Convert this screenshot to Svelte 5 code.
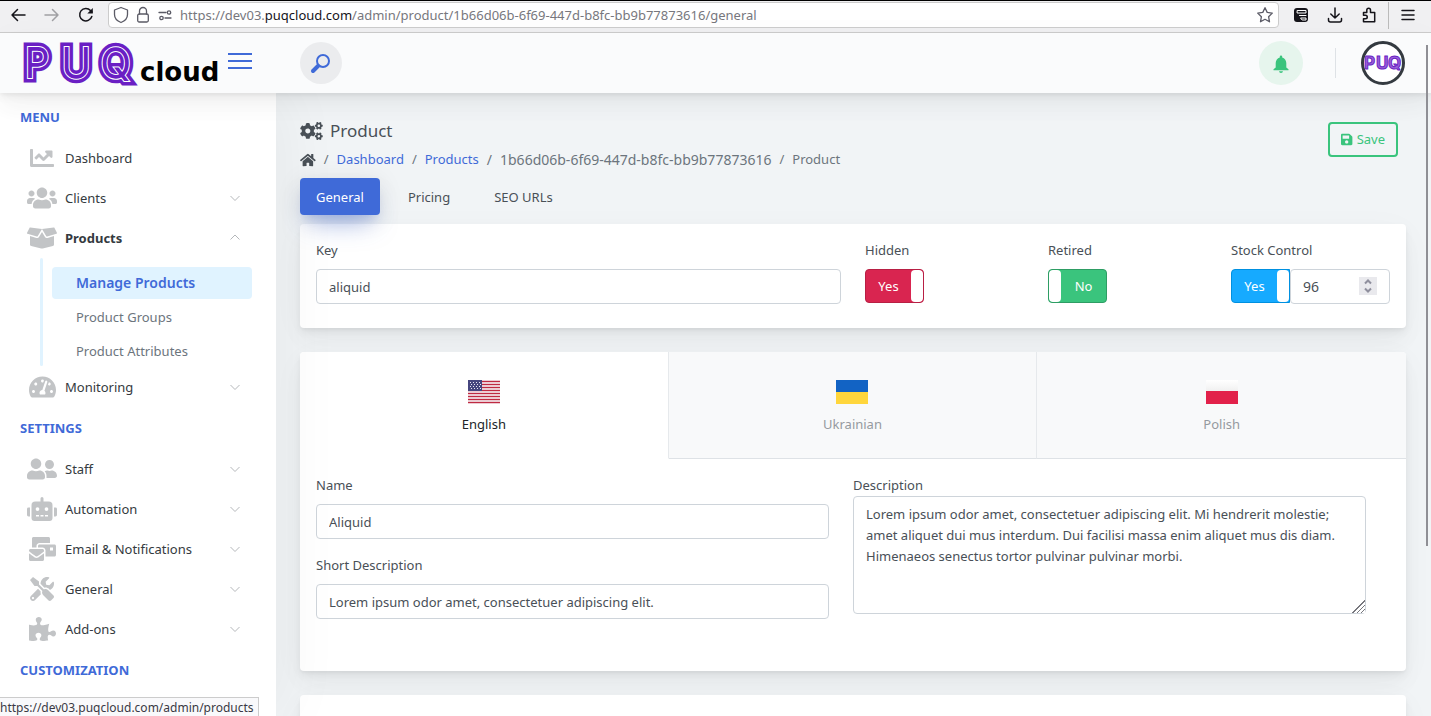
<script>
  const icons = {
    chart: { w: 512, d: 'M496 384H64V80c0-8.84-7.16-16-16-16H16C7.16 64 0 71.16 0 80v336c0 17.67 14.33 32 32 32h464c8.84 0 16-7.16 16-16v-32c0-8.84-7.16-16-16-16zM464 96H345.94c-21.38 0-32.09 25.85-16.97 40.97l32.4 32.4L288 242.75l-73.37-73.37c-12.5-12.5-32.76-12.5-45.25 0l-68.69 68.69c-6.25 6.25-6.25 16.38 0 22.63l22.62 22.62c6.25 6.25 16.38 6.25 22.63 0L192 237.25l73.37 73.37c12.5 12.5 32.76 12.5 45.25 0l96-96 32.4 32.4c15.12 15.12 40.97 4.41 40.97-16.97V112c.01-8.84-7.15-16-15.99-16z' },
    users: { w: 640, d: 'M96 224c35.3 0 64-28.7 64-64s-28.7-64-64-64-64 28.7-64 64 28.7 64 64 64zm448 0c35.3 0 64-28.7 64-64s-28.7-64-64-64-64 28.7-64 64 28.7 64 64 64zm32 32h-64c-17.6 0-33.5 7.1-45.1 18.6 40.3 22.1 68.9 62 75.1 109.4h66c17.7 0 32-14.3 32-32v-32c0-35.3-28.7-64-64-64zm-256 0c61.9 0 112-50.1 112-112S381.9 32 320 32 208 82.1 208 144s50.1 112 112 112zm76.8 32h-8.3c-20.8 10-43.9 16-68.5 16s-47.6-6-68.5-16h-8.3C179.6 288 128 339.6 128 403.2V432c0 26.5 21.5 48 48 48h288c26.5 0 48-21.5 48-48v-28.8c0-63.6-51.6-115.2-115.2-115.2zm-223.7-13.4C161.5 263.1 145.6 256 128 256H64c-35.3 0-64 28.7-64 64v32c0 17.7 14.3 32 32 32h65.9c6.3-47.4 34.9-87.3 75.2-109.4z' },
    box: { w: 640, d: 'M425.7 256c-16.9 0-32.8-9-41.4-23.4L320 126l-64.2 106.6c-8.7 14.5-24.6 23.5-41.5 23.5-4.5 0-9-.6-13.3-1.9L64 215v178c0 14.7 10 27.5 24.2 31l216.2 54.1c10.2 2.5 20.9 2.5 31 0L551.8 424c14.2-3.6 24.2-16.4 24.2-31V215l-137 39.1c-4.3 1.3-8.8 1.9-13.3 1.9zm212.6-112.2L586.8 41c-3.1-6.2-9.8-9.8-16.7-8.9L320 64l91.7 152.1c3.8 6.3 11.4 9.3 18.5 7.3l197.9-56.5c9.9-2.9 14.7-13.9 10.2-23.1zM53.2 41L1.7 143.8c-4.6 9.2.3 20.2 10.1 23l197.9 56.5c7.1 2 14.7-1 18.5-7.3L320 64 69.8 32.1c-6.9-.8-13.5 2.7-16.6 8.9z' },
    gauge: { w: 576, d: 'M288 32C128.94 32 0 160.94 0 320c0 52.8 14.25 102.26 39.06 144.8 5.61 9.62 16.3 15.2 27.44 15.2h443c11.14 0 21.83-5.58 27.44-15.2C561.75 422.26 576 372.8 576 320c0-159.06-128.94-288-288-288zm0 64c14.71 0 26.58 10.13 30.32 23.65-1.11 2.26-2.64 4.23-3.45 6.67l-9.22 27.67c-5.13 3.49-10.97 6.01-17.64 6.01-17.67 0-32-14.33-32-32S270.33 96 288 96zM96 384c-17.67 0-32-14.33-32-32s14.33-32 32-32 32 14.33 32 32-14.33 32-32 32zm48-160c-17.67 0-32-14.33-32-32s14.33-32 32-32 32 14.33 32 32-14.33 32-32 32zm246.77-72.41l-61.33 184C343.13 347.33 352 364.54 352 384c0 11.72-3.38 22.55-8.88 32H232.88c-5.5-9.45-8.88-20.28-8.88-32 0-33.94 26.5-61.43 59.9-63.59l61.34-184.01c4.17-12.56 17.73-19.45 30.36-15.17 12.57 4.19 19.35 17.79 15.17 30.36zm14.66 57.2l15.52-46.55c3.47-1.29 7.13-2.23 11.05-2.23 17.67 0 32 14.33 32 32s-14.33 32-32 32c-11.38-.01-20.89-6.28-26.57-15.22zM480 384c-17.67 0-32-14.33-32-32s14.33-32 32-32 32 14.33 32 32-14.33 32-32 32z' },
    friends: { w: 640, d: 'M192 256c61.9 0 112-50.1 112-112S253.9 32 192 32 80 82.1 80 144s50.1 112 112 112zm76.8 32h-8.3c-20.8 10-43.9 16-68.5 16s-47.6-6-68.5-16h-8.3C51.6 288 0 339.6 0 403.2V432c0 26.5 21.5 48 48 48h288c26.5 0 48-21.5 48-48v-28.8c0-63.6-51.6-115.2-115.2-115.2zM480 256c53 0 96-43 96-96s-43-96-96-96-96 43-96 96 43 96 96 96zm48 32h-3.8c-13.9 4.8-28.6 8-44.2 8s-30.3-3.2-44.2-8H432c-20.4 0-39.2 5.9-55.7 15.4 24.4 26.3 39.7 61.2 39.7 99.8v38.4c0 2.2-.5 4.3-.6 6.4H592c26.5 0 48-21.5 48-48 0-61.9-50.1-112-112-112z' },
    robot: { w: 640, d: 'M32,224H64V416H32A31.96166,31.96166,0,0,1,0,384V256A31.96166,31.96166,0,0,1,32,224Zm512-48V448a64.06328,64.06328,0,0,1-64,64H160a64.06328,64.06328,0,0,1-64-64V176a79.974,79.974,0,0,1,80-80H288V32a32,32,0,0,1,64,0V96H464A79.974,79.974,0,0,1,544,176ZM264,256a40,40,0,1,0-40,40A39.997,39.997,0,0,0,264,256Zm-8,128H192v32h64Zm96,0H288v32h64ZM456,256a40,40,0,1,0-40,40A39.997,39.997,0,0,0,456,256Zm-8,128H384v32h64ZM640,256V384a31.96166,31.96166,0,0,1-32,32H576V224h32A31.96166,31.96166,0,0,1,640,256Z' },
    mail: { w: 576, d: 'M160 448c-25.6 0-51.2-22.4-64-32-64-44.8-83.2-60.8-96-70.4V480c0 17.67 14.33 32 32 32h256c17.67 0 32-14.33 32-32V345.6c-12.8 9.6-32 25.6-96 70.4-12.8 9.6-38.4 32-64 32zm128-192H32c-17.67 0-32 14.33-32 32v16c25.6 19.2 22.4 19.2 115.2 86.4 9.6 6.4 28.8 25.6 44.8 25.6s35.2-19.2 44.8-22.4c92.8-67.2 89.6-67.2 115.2-86.4V288c0-17.67-14.33-32-32-32zm256-96H224c-17.67 0-32 14.33-32 32v32h96c33.21 0 60.59 25.42 63.71 57.82l.29-.22V416h192c17.67 0 32-14.33 32-32V192c0-17.67-14.33-32-32-32zm-32 128h-64v-64h64v64zm-352-96c0-35.29 28.71-64 64-64h224V32c0-17.67-14.33-32-32-32H96C78.33 0 64 14.33 64 32v192h96v-32z' },
    tools: { w: 512, d: 'M501.1 395.7L384 278.6c-23.1-23.1-57.6-27.6-85.4-13.9L192 158.1V96L64 0 0 64l96 128h62.1l106.6 106.6c-13.6 27.8-9.2 62.3 13.9 85.4l117.1 117.1c14.6 14.6 38.2 14.6 52.7 0l52.7-52.7c14.5-14.6 14.5-38.2 0-52.7zM331.7 225c28.3 0 54.9 11 74.9 31l19.4 19.4c15.8-6.9 30.8-16.5 43.8-29.5 37.1-37.1 49.7-89.3 37.9-136.7-2.2-9-13.5-12.1-20.1-5.5l-74.4 74.4-67.9-11.3L334 98.9l74.4-74.4c6.6-6.6 3.4-17.9-5.7-20.2-47.4-11.7-99.6.9-136.6 37.9-28.5 28.5-41.9 66.1-41.2 103.6l82.1 82.1c8.1-1.9 16.5-2.9 24.7-2.9zm-103.9 82l-56.7-56.7L18.7 402.8c-25 25-25 65.5 0 90.5s65.5 25 90.5 0l123.6-123.6c-7.6-19.9-9.9-41.6-5-62.7zM64 472c-13.2 0-24-10.8-24-24 0-13.3 10.7-24 24-24s24 10.7 24 24c0 13.2-10.7 24-24 24z' },
    puzzle: { w: 576, d: 'M519.442 288.651c-41.519 0-59.5 31.593-82.058 31.593C377.409 320.244 432 144 432 144s-196.288 80-196.288-3.297c0-35.827 36.288-46.25 36.288-85.985C272 19.216 243.885 0 210.539 0c-34.654 0-66.366 18.891-66.366 56.346 0 41.364 31.711 59.277 31.711 81.75C175.885 207.719 0 166.758 0 166.758v333.237s178.635 41.047 178.635-28.662c0-22.473-40-40.107-40-81.471 0-37.456 29.25-56.346 63.577-56.346 33.673 0 61.788 19.216 61.788 54.717 0 39.735-36.288 50.158-36.288 85.985 0 60.803 129.675 25.73 181.23 25.73 0 0-34.725-120.101 25.827-120.101 35.962 0 46.423 36.152 86.308 36.152C556.712 416 576 387.99 576 354.443c0-34.199-18.962-65.792-56.558-65.792z' },
    home: { w: 576, d: 'M280.37 148.26L96 300.11V464a16 16 0 0 0 16 16l112.06-.29a16 16 0 0 0 15.92-16V368a16 16 0 0 1 16-16h64a16 16 0 0 1 16 16v95.64a16 16 0 0 0 16 16.05L464 480a16 16 0 0 0 16-16V300L295.67 148.26a12.19 12.19 0 0 0-15.3 0zM571.6 251.47L488 182.56V44.05a12 12 0 0 0-12-12h-56a12 12 0 0 0-12 12v72.61L318.47 43a48 48 0 0 0-61 0L4.34 251.47a12 12 0 0 0-1.6 16.9l25.5 31A12 12 0 0 0 45.15 301l235.22-193.74a12.19 12.19 0 0 1 15.3 0L530.9 301a12 12 0 0 0 16.9-1.6l25.5-31a12 12 0 0 0-1.7-16.93z' },
    save: { w: 448, d: 'M433.941 129.941l-83.882-83.882A48 48 0 0 0 316.118 32H48C21.49 32 0 53.49 0 80v352c0 26.51 21.49 48 48 48h352c26.51 0 48-21.49 48-48V163.882a48 48 0 0 0-14.059-33.941zM224 416c-35.346 0-64-28.654-64-64 0-35.346 28.654-64 64-64s64 28.654 64 64c0 35.346-28.654 64-64 64zm96-304.52V212c0 6.627-5.373 12-12 12H76c-6.627 0-12-5.373-12-12V108c0-6.627 5.373-12 12-12h228.52c3.183 0 6.235 1.264 8.485 3.515l3.48 3.48A11.996 11.996 0 0 1 320 111.48z' }
  };

  const smallCog = 'M512.1 191l-8.2 14.3c-3 5.3-9.4 7.5-15.1 5.4-11.8-4.4-22.6-10.7-32.1-18.6-4.6-3.8-5.8-10.5-2.8-15.7l8.2-14.3c-6.9-8-12.3-17.3-15.9-27.4h-16.5c-6 0-11.2-4.3-12.2-10.3-2-12-2.1-24.6 0-37.1 1-6 6.2-10.4 12.2-10.4h16.5c3.6-10.1 9-19.4 15.9-27.4l-8.2-14.3c-3-5.2-1.9-11.9 2.8-15.7 9.5-7.9 20.4-14.2 32.1-18.6 5.7-2.1 12.1.1 15.1 5.4l8.2 14.3c10.5-1.9 21.2-1.9 31.7 0L552 6.3c3-5.3 9.4-7.5 15.1-5.4 11.8 4.4 22.6 10.7 32.1 18.6 4.6 3.8 5.8 10.5 2.8 15.7l-8.2 14.3c6.9 8 12.3 17.3 15.9 27.4h16.5c6 0 11.2 4.3 12.2 10.3 2 12 2.1 24.6 0 37.1-1 6-6.2 10.4-12.2 10.4h-16.5c-3.6 10.1-9 19.4-15.9 27.4l8.2 14.3c3 5.2 1.9 11.9-2.8 15.7-9.5 7.9-20.4 14.2-32.1 18.6-5.7 2.1-12.1-.1-15.1-5.4l-8.2-14.3c-10.4 1.9-21.2 1.9-31.7 0zm-10.5-58.8c38.5 29.6 82.4-14.3 52.8-52.8-38.5-29.7-82.4 14.3-52.8 52.8z';
  const bigCog = 'M386.3 286.1l33.7 16.8c10.1 5.8 14.5 18.1 10.5 29.1-8.9 24.2-26.4 46.4-42.6 65.8-7.4 8.9-20.2 11.1-30.3 5.3l-29.1-16.8c-16 13.7-34.6 24.6-54.9 31.7v33.6c0 11.6-8.3 21.6-19.7 23.6-24.6 4.2-50.4 4.4-75.9 0-11.5-2-20-11.9-20-23.6V418c-20.3-7.2-38.9-18-54.9-31.7L74 403c-10 5.8-22.9 3.6-30.3-5.3-16.2-19.4-33.3-41.6-42.2-65.7-4-10.9.4-23.2 10.5-29.1l33.3-16.8c-3.9-20.9-3.9-42.4 0-63.4L12 205.8c-10.1-5.8-14.6-18.1-10.5-29 8.9-24.2 26-46.4 42.2-65.8 7.4-8.9 20.2-11.1 30.3-5.3l29.1 16.8c16-13.7 34.6-24.6 54.9-31.7V57.1c0-11.5 8.2-21.5 19.6-23.5 24.6-4.2 50.5-4.4 76-.1 11.5 2 20 11.9 20 23.6v33.6c20.3 7.2 38.9 18 54.9 31.7l29.1-16.8c10-5.8 22.9-3.6 30.3 5.3 16.2 19.4 33.2 41.6 42.1 65.8 4 10.9.1 23.2-10 29.1l-33.7 16.8c3.9 21 3.9 42.5 0 63.5zm-117.6 21.1c59.2-77-28.7-164.9-105.7-105.7-59.2 77 28.7 164.9 105.7 105.7z';

  const menu = [
    {
      title: 'Menu',
      items: [
        { label: 'Dashboard', icon: 'chart' },
        { label: 'Clients', icon: 'users', more: true },
        {
          label: 'Products', icon: 'box', more: true, open: true,
          children: ['Manage Products', 'Product Groups', 'Product Attributes']
        },
        { label: 'Monitoring', icon: 'gauge', more: true }
      ]
    },
    {
      title: 'Settings',
      items: [
        { label: 'Staff', icon: 'friends', more: true },
        { label: 'Automation', icon: 'robot', more: true },
        { label: 'Email & Notifications', icon: 'mail', more: true },
        { label: 'General', icon: 'tools', more: true },
        { label: 'Add-ons', icon: 'puzzle', more: true }
      ]
    },
    { title: 'Customization', items: [] }
  ];

  const languages = [
    { id: 'us', name: 'English' },
    { id: 'ua', name: 'Ukrainian' },
    { id: 'pl', name: 'Polish' }
  ];
  const tabs = ['General', 'Pricing', 'SEO URLs'];
  const uuid = '1b66d06b-6f69-447d-b8fc-bb9b77873616';

  let tab = $state('General');
  let language = $state('us');
  let key = $state('aliquid');
  let hidden = $state(true);
  let retired = $state(false);
  let stockControl = $state(true);
  let stock = $state(96);
  let name = $state('Aliquid');
  let shortDescription = $state('Lorem ipsum odor amet, consectetuer adipiscing elit.');
  let description = $state('Lorem ipsum odor amet, consectetuer adipiscing elit. Mi hendrerit molestie; amet aliquet dui mus interdum. Dui facilisi massa enim aliquet mus dis diam. Himenaeos senectus tortor pulvinar pulvinar morbi.');
</script>

{#snippet glyph(icon, size)}
  <svg class="glyph" width={(icons[icon].w / 512) * size} height={size} viewBox="0 0 {icons[icon].w} 512" aria-hidden="true">
    <path d={icons[icon].d} />
  </svg>
{/snippet}

<div class="window">
  <div class="browser">
    <div class="nav-buttons">
      <button aria-label="Back"><svg width="16" height="16" viewBox="0 0 16 16"><path d="M15 8H2M7.500 2.500L2 8l5.500 5.500" /></svg></button>
      <button aria-label="Forward" class="dim"><svg width="16" height="16" viewBox="0 0 16 16"><path d="M1 8h13M8.500 2.500L14 8l-5.500 5.500" /></svg></button>
      <button aria-label="Reload"><svg width="16" height="16" viewBox="0 0 16 16"><path d="M13.800 9.500A6.200 6.200 0 1 1 12.500 3.600L14 5" /><path class="solid" d="M14.800 1v5.500H9.300z" /></svg></button>
    </div>
    <div class="address">
      <svg width="16" height="18" viewBox="0 0 16 18"><path d="M8 1.500L14.500 4v4.500c0 4-2.600 6.500-6.500 8-3.900-1.500-6.500-4-6.500-8V4z" /></svg>
      <svg width="14" height="18" viewBox="0 0 14 18"><rect x="1.700" y="8" width="10.600" height="8" rx="1.500" /><path d="M3.500 8V5a3.500 3.500 0 0 1 7 0v3" /></svg>
      <svg width="16" height="16" viewBox="0 0 16 16"><path d="M2 5.500h7M8 11h6" /><circle cx="12" cy="5.500" r="1.700" /><circle cx="4.500" cy="11" r="1.700" /></svg>
      <div class="url">https://dev03.<b>puqcloud.com</b>/admin/product/{uuid}/general</div>
      <svg width="18" height="18" viewBox="0 0 18 18"><path d="M9 1.700l2.200 4.700 5.100.7-3.700 3.600.9 5.100L9 13.300l-4.500 2.500.9-5.100L1.700 7.100l5.100-.7z" /></svg>
    </div>
    <div class="tools">
      <button aria-label="Container extension"><svg width="16" height="16" viewBox="0 0 16 16"><rect class="solid" x="1" y="1" width="14" height="14" rx="3" /><path class="cut" d="M4.500 3.500h8.500v2.500H4.500zM6.500 8.500H13M8 11h5v2H9.500z" /></svg></button>
      <button aria-label="Downloads"><svg width="16" height="16" viewBox="0 0 16 16"><path d="M8 1v10M3.800 7L8 11l4.200-4M1.500 11.500V13A2 2 0 0 0 3.500 15h9a2 2 0 0 0 2-2v-1.500" /></svg></button>
      <button aria-label="Extensions"><svg width="16" height="16" viewBox="0 0 16 16"><path d="M2.500 5.500h3.300V3a1.800 1.800 0 0 1 3.700 0v2.500h4.200v9.300H2.500v-3h2a1.700 1.700 0 0 0 0-3.500h-2z" /></svg></button>
      <i></i>
      <button aria-label="Menu"><svg width="16" height="16" viewBox="0 0 16 16"><path d="M2 3.500h12M2 8h12M2 12.500h12" /></svg></button>
    </div>
  </div>

  <div class="page">
    <header>
      <div class="brand">
        <a href="#home" class="logo" aria-label="PUQcloud">
          <svg width="202" height="48" viewBox="0 0 202 48">
            <defs>
              <text id="brand-letters" x="4 41 80" y="38">PUQ</text>
            </defs>
            <use href="#brand-letters" class="outer" />
            <use href="#brand-letters" class="gap" />
            <use href="#brand-letters" class="inner" />
            <text class="word" x="119" y="42">cloud</text>
          </svg>
        </a>
        <button class="burger" aria-label="Toggle sidebar"><span></span><span></span><span></span></button>
      </div>
      <button class="search" aria-label="Search">
        <svg width="22" height="22" viewBox="0 0 22 22"><circle cx="13" cy="9" r="6" /><path d="M8 14L3 19" /></svg>
      </button>
      <div class="account">
        <button class="bell" aria-label="Notifications">
          <svg width="16" height="18" viewBox="0 0 16 18"><path d="M8 18a2 2 0 0 0 2-1.800H6A2 2 0 0 0 8 18zM13.300 12.500V8c0-2.800-1.700-5-4.100-5.600V1.800A1.200 1.200 0 0 0 8 .5a1.200 1.200 0 0 0-1.200 1.300v.6C4.400 3 2.700 5.200 2.700 8v4.500L.5 14.300v.9h15v-.9z" /></svg>
        </button>
        <i></i>
        <button class="avatar" aria-label="Account">
          <svg width="38" height="38" viewBox="0 0 38 38">
            <text class="avatar-letters" x="0 12 24" y="25">PUQ</text>
          </svg>
        </button>
      </div>
    </header>

    <div class="body">
      <nav aria-label="Main">
        {#each menu as group}
          <h2>{group.title}</h2>
          {#each group.items as item}
            <a class="item" class:open={item.open} href="#{item.icon}">
              <span class="icon">{@render glyph(item.icon, 24)}</span>
              <span class="label">{item.label}</span>
              {#if item.more}
                <svg class="chevron" width="10" height="10" viewBox="0 0 10 10"><path d={item.open ? 'M.5 6.500L5 2l4.500 4.500' : 'M.5 3L5 7.500 9.500 3'} /></svg>
              {/if}
            </a>
            {#if item.children}
              <ul>
                {#each item.children as child, i}
                  <li><a href="#products" class:current={i === 0}>{child}</a></li>
                {/each}
              </ul>
            {/if}
          {/each}
        {/each}
      </nav>

      <main>
        <div class="title-row">
          <div>
            <h1>
              <svg class="glyph" width="23" height="18" viewBox="0 0 640 512" aria-hidden="true">
                <path d={bigCog} /><path d={smallCog} /><path d={smallCog} transform="translate(0 299)" />
              </svg>
              Product
            </h1>
            <ol>
              <li><a href="#home" class="home" aria-label="Home">{@render glyph('home', 14)}</a></li>
              <li><a href="#dashboard">Dashboard</a></li>
              <li><a href="#products">Products</a></li>
              <li class="uuid">{uuid}</li>
              <li>Product</li>
            </ol>
          </div>
          <button class="save">{@render glyph('save', 13)} Save</button>
        </div>

        <div class="tabs" role="tablist">
          {#each tabs as t}
            <button role="tab" aria-selected={tab === t} class:active={tab === t} onclick={() => (tab = t)}>{t}</button>
          {/each}
        </div>

        <section class="card settings">
          <div class="field wide">
            <label for="key">Key</label>
            <input id="key" type="text" bind:value={key} />
          </div>
          <div class="field">
            <label for="hidden">Hidden</label>
            <span class="toggle red" class:off={!hidden}>
              <input id="hidden" type="checkbox" bind:checked={hidden} />
              <span>{hidden ? 'Yes' : 'No'}</span><i></i>
            </span>
          </div>
          <div class="field">
            <label for="retired">Retired</label>
            <span class="toggle green" class:off={!retired}>
              <input id="retired" type="checkbox" bind:checked={retired} />
              <span>{retired ? 'Yes' : 'No'}</span><i></i>
            </span>
          </div>
          <div class="field">
            <label for="stock-control">Stock Control</label>
            <div class="joined">
              <span class="toggle blue" class:off={!stockControl}>
                <input id="stock-control" type="checkbox" bind:checked={stockControl} />
                <span>{stockControl ? 'Yes' : 'No'}</span><i></i>
              </span>
              <div class="number">
                <input type="number" aria-label="Stock quantity" bind:value={stock} />
                <svg width="18" height="18" viewBox="0 0 18 18" aria-hidden="true"><path d="M6 6.500L9 3.500l3 3M6 11.500l3 3 3-3" /></svg>
              </div>
            </div>
          </div>
        </section>

        <section class="card translations">
          <div class="languages" role="tablist">
            {#each languages as lang}
              <button role="tab" aria-selected={language === lang.id} class:active={language === lang.id} onclick={() => (language = lang.id)}>
                <svg width="32" height="24" viewBox="0 0 32 24" aria-hidden="true">
                  {#if lang.id === 'us'}
                    <rect width="32" height="24" fill="#eccbd2" />
                    {#each [0, 3, 6, 9, 12, 15, 18, 21] as y}
                      <rect y={y + 1} width="32" height="1" fill="#bf2a42" />
                    {/each}
                    <rect width="14" height="11" fill="#46467f" />
                    {#each [2, 4, 6, 8] as y, row}
                      {#each [2, 5, 8, 11] as x}
                        <rect x={x + (row % 2)} {y} width="1" height="1" fill="#e6e6f2" />
                      {/each}
                    {/each}
                  {:else if lang.id === 'ua'}
                    <rect width="32" height="12" fill="#1263c4" /><rect y="12" width="32" height="12" fill="#ffd63c" />
                  {:else}
                    <defs>
                      <linearGradient id="white-band" x2="0" y2="1"><stop stop-color="#fff" /><stop offset="1" stop-color="#efefef" /></linearGradient>
                    </defs>
                    <rect width="32" height="12" fill="url(#white-band)" /><rect y="11" width="32" height="13" fill="#e2214a" />
                  {/if}
                </svg>
                {lang.name}
              </button>
            {/each}
          </div>
          <div class="texts">
            <div class="column">
              <div class="field">
                <label for="name">Name</label>
                <input id="name" type="text" bind:value={name} />
              </div>
              <div class="field">
                <label for="short">Short Description</label>
                <input id="short" type="text" bind:value={shortDescription} />
              </div>
            </div>
            <div class="field tight">
              <label for="description">Description</label>
              <textarea id="description" bind:value={description}></textarea>
            </div>
          </div>
        </section>

        <section class="card rest"></section>
      </main>
    </div>
    <div class="scroll-thumb"></div>
  </div>
  <div class="status">https://dev03.puqcloud.com/admin/products</div>
</div>

<style>
  :global(body) {
    background: #f1f4f6;
  }
  .window {
    height: 100vh;
    overflow: hidden;
    display: flex;
    flex-direction: column;
    font: 13px/21px 'Noto Sans', sans-serif;
    color: #495057;
  }
  .window * {
    box-sizing: border-box;
  }
  button {
    font: inherit;
    color: inherit;
    border: 0;
    padding: 0;
    background: none;
    cursor: pointer;
  }
  a {
    color: #3f6ad8;
    text-decoration: none;
  }
  svg {
    display: block;
    flex: none;
  }
  .glyph {
    fill: currentColor;
  }

  /* Browser toolbar */
  .browser {
    flex: none;
    height: 33px;
    display: flex;
    align-items: center;
    padding: 0 15px 3px 10px;
    border-top: 1px solid #000;
    border-bottom: 1px solid #ccc;
    background: #f0f0f2;
    color: #15141a;
  }
  .browser svg {
    fill: none;
    stroke: currentColor;
    stroke-width: 1.5;
    stroke-linecap: round;
    stroke-linejoin: round;
  }
  .browser .solid {
    fill: currentColor;
    stroke: none;
  }
  .browser .cut {
    stroke: #fff;
    stroke-width: 1;
  }
  .nav-buttons {
    display: flex;
    gap: 18px;
    padding-right: 14px;
  }
  .dim {
    color: #a0a0a4;
  }
  .address {
    flex: 1;
    height: 26px;
    display: flex;
    align-items: center;
    gap: 7px;
    padding: 0 4px;
    border: 1px solid #ccc;
    border-radius: 4px;
    background: #fff;
  }
  .address svg {
    stroke: #5b5b66;
    stroke-width: 1.3;
  }
  .url {
    flex: 1;
    color: #77777d;
    white-space: nowrap;
  }
  .url b {
    font-weight: 400;
    color: #15141a;
  }
  .tools {
    display: flex;
    align-items: center;
    gap: 18px;
    padding-left: 14px;
  }
  .tools i {
    width: 1px;
    height: 27px;
    margin: 0 -7px;
    background: #bbb;
  }

  /* Application header */
  .page {
    flex: 1;
    min-height: 0;
    position: relative;
    display: flex;
    flex-direction: column;
  }
  header {
    flex: none;
    position: relative;
    z-index: 2;
    height: 60px;
    display: flex;
    align-items: center;
    padding-right: 26px;
    background: #fafbfc;
    box-shadow: 0 7px 35px rgba(4, 9, 20, 0.03), 0 15px 22px rgba(4, 9, 20, 0.03), 0 4px 8px rgba(4, 9, 20, 0.05), 0 2px 3px rgba(4, 9, 20, 0.03);
  }
  .brand {
    width: 276px;
    display: flex;
    align-items: center;
    justify-content: space-between;
    padding: 0 24px 0 21px;
  }
  .logo text {
    font-family: Inter, sans-serif;
    font-weight: 200;
    font-size: 39px;
  }
  .outer {
    fill: #6a1fc4;
    stroke: #6a1fc4;
    stroke-width: 11;
  }
  .gap {
    fill: #fff;
    stroke: #fff;
    stroke-width: 4;
  }
  .inner {
    fill: #6a1fc4;
    stroke: #6a1fc4;
    stroke-width: 2;
  }
  .logo .word {
    font-family: 'DejaVu Sans', sans-serif;
    font-weight: 700;
    font-size: 26px;
    fill: #000;
  }
  .burger {
    width: 24px;
    display: grid;
    gap: 5px;
    padding-bottom: 4px;
  }
  .burger span {
    height: 2px;
    background: #3f6ad8;
  }
  .search {
    width: 42px;
    height: 42px;
    margin-left: 24px;
    display: grid;
    place-items: center;
    border-radius: 50%;
    background: #ebecee;
  }
  .search svg {
    fill: none;
    stroke: #3f6ad8;
    stroke-width: 2;
    stroke-linecap: round;
  }
  .search path {
    stroke-width: 4;
  }
  .account {
    margin-left: auto;
    display: flex;
    align-items: center;
  }
  .account i {
    width: 1px;
    height: 30px;
    margin: 0 25px 0 32px;
    background: #dee2e6;
  }
  .bell {
    width: 44px;
    height: 44px;
    display: grid;
    place-items: center;
    padding-top: 2px;
    border-radius: 50%;
    background: #e6f5ed;
    fill: #3ac47d;
  }
  .avatar {
    width: 44px;
    height: 44px;
    border: 3px solid #343a40;
    border-radius: 50%;
    background: #fff;
    overflow: hidden;
  }
  .avatar-letters {
    font: 700 17px Inter, sans-serif;
    fill: #9a62d8;
    stroke: #6a1fc4;
    stroke-width: 1;
  }

  /* Sidebar */
  .body {
    flex: 1;
    min-height: 0;
    display: flex;
  }
  nav {
    flex: none;
    width: 276px;
    padding-top: 3px;
    overflow: hidden;
    background: #fff;
    position: relative;
    z-index: 1;
    box-shadow: 7px 0 60px rgba(0, 0, 0, 0.05);
  }
  h2 {
    margin: 0;
    padding-left: 20px;
    font-size: 13px;
    font-weight: 700;
    line-height: 42px;
    text-transform: uppercase;
    color: #3f6ad8;
  }
  .item {
    height: 40px;
    display: flex;
    align-items: center;
    padding: 0 36px 0 27px;
    color: #343a40;
  }
  .icon {
    width: 30px;
    margin-right: 8px;
    display: grid;
    place-items: center;
    color: #c2c4c6;
  }
  .label {
    flex: 1;
  }
  .item.open .label {
    font-weight: 700;
  }
  .chevron {
    fill: none;
    stroke: #b4b7ba;
    stroke-width: 1;
  }
  nav ul {
    list-style: none;
    margin: 0 24px 0 40px;
    padding: 9px 0 0 12px;
    position: relative;
  }
  nav ul::before {
    content: '';
    position: absolute;
    inset: 0 auto 1px 0;
    width: 3px;
    border-radius: 2px;
    background: #e0f3ff;
  }
  nav li {
    padding-bottom: 2px;
  }
  nav li:last-child {
    padding-bottom: 0;
  }
  nav li a {
    display: block;
    padding-left: 24px;
    line-height: 32px;
    border-radius: 4px;
    color: #6c757d;
  }
  nav li .current {
    background: #e0f3ff;
    color: #3f6ad8;
    font-size: 14px;
    font-weight: 600;
  }

  /* Content */
  main {
    flex: 1;
    min-width: 0;
    overflow: hidden;
    padding: 27px 25px 0 24px;
    background: #f1f4f6;
  }
  .title-row {
    display: flex;
    justify-content: space-between;
    align-items: flex-start;
    padding-right: 8px;
  }
  h1 {
    margin: 0;
    display: flex;
    align-items: center;
    gap: 7px;
    font-size: 17px;
    font-weight: 400;
    line-height: 22px;
  }
  ol {
    display: flex;
    list-style: none;
    margin: 0;
    padding: 7px 0 8px;
    color: #6c757d;
  }
  ol li {
    display: flex;
    align-items: center;
  }
  ol li + li::before {
    content: '/';
    padding: 0 8px;
  }
  .uuid {
    font-size: 14px;
  }
  .home {
    color: #495057;
  }
  .save {
    height: 35px;
    display: flex;
    align-items: center;
    gap: 4px;
    margin-top: 2px;
    padding: 0 11px;
    border: 2px solid #3ac47d;
    border-radius: 4px;
    color: #3ac47d;
  }
  .tabs {
    display: flex;
    gap: 12px;
    position: relative;
    z-index: 1;
  }
  .tabs button {
    padding: 9px 16px 7px;
    border-radius: 4px;
  }
  .tabs .active {
    background: #3f6ad8;
    color: #fff;
    box-shadow: 0 16px 26px -10px rgba(63, 106, 216, 0.5), 0 4px 25px rgba(0, 0, 0, 0.1), 0 8px 10px -5px rgba(63, 106, 216, 0.2);
  }
  .card {
    margin-bottom: 24px;
    border-radius: 4px;
    background: #fff;
    box-shadow: 0 7px 35px rgba(4, 9, 20, 0.03), 0 15px 22px rgba(4, 9, 20, 0.03), 0 4px 8px rgba(4, 9, 20, 0.05), 0 2px 3px rgba(4, 9, 20, 0.03);
  }
  .settings {
    margin-top: 9px;
    padding: 16px 16px 24px;
    display: grid;
    grid-template-columns: repeat(6, 1fr);
    gap: 24px;
  }
  .wide {
    grid-column: span 3;
  }
  .field {
    display: flex;
    flex-direction: column;
    align-items: flex-start;
    gap: 8px;
    min-width: 0;
  }
  .tight {
    gap: 0;
  }
  input,
  textarea {
    width: 100%;
    height: 35px;
    margin: 0;
    padding: 0 12px;
    border: 1px solid #ced4da;
    border-radius: 4px;
    background: #fff;
    font: inherit;
    color: #495057;
  }
  textarea {
    height: 118px;
    padding: 7px 12px;
  }
  textarea::-webkit-resizer {
    background:
      linear-gradient(135deg, #fff 50%, transparent 50%),
      repeating-linear-gradient(135deg, #77777d 0 1px, #fff 1px 3px);
  }
  .toggle {
    position: relative;
    width: 59px;
    height: 34px;
    flex: none;
    display: flex;
    overflow: hidden;
    border: 1px solid;
    border-radius: 4px;
    color: #fff;
    line-height: 32px;
    text-align: center;
  }
  .toggle.off {
    flex-direction: row-reverse;
  }
  .toggle input {
    position: absolute;
    inset: 0;
    height: 100%;
    opacity: 0;
    cursor: pointer;
  }
  .toggle span {
    flex: 1;
  }
  .toggle i {
    width: 12px;
    border-radius: 4px;
    background: #fff;
  }
  .red {
    background: #d92550;
    border-color: #b81f44;
  }
  .green {
    background: #3ac47d;
    border-color: #2e9d64;
  }
  .blue {
    background: #16aaff;
    border-color: #0090e0;
  }
  .joined {
    display: flex;
    width: 100%;
  }
  .joined .toggle {
    border-radius: 4px 0 0 4px;
  }
  .number {
    flex: 1;
    min-width: 0;
    position: relative;
  }
  .number input {
    appearance: textfield;
    -moz-appearance: textfield;
    font-size: 14px;
  }
  .number input::-webkit-inner-spin-button {
    appearance: none;
  }
  .number svg {
    position: absolute;
    right: 13px;
    top: 8px;
    fill: none;
    stroke: #8f8f9d;
    stroke-width: 2;
    background: #e9e9ed;
  }
  .languages {
    display: grid;
    grid-template-columns: repeat(3, 1fr);
  }
  .languages button {
    height: 107px;
    display: flex;
    flex-direction: column;
    align-items: center;
    gap: 10px;
    padding-top: 28px;
    border-bottom: 1px solid #dee2e6;
    border-right: 1px solid #e6e9ec;
    background: #f8f9fa;
    color: #959a9f;
  }
  .languages button:first-child {
    border-top-left-radius: 4px;
  }
  .languages button:last-child {
    border-right: 0;
    border-top-right-radius: 4px;
  }
  .languages .active {
    border-bottom-color: #fff;
    background: #fff;
    color: #212529;
  }
  .texts {
    display: grid;
    grid-template-columns: 1fr 1fr;
    gap: 24px;
    padding: 16px 40px 52px 16px;
  }
  .column {
    display: grid;
    gap: 16px;
  }
  .rest {
    height: 200px;
  }
  .scroll-thumb {
    position: absolute;
    z-index: 3;
    right: 3px;
    top: 12px;
    width: 2px;
    height: 501px;
    background: #8f8f95;
  }
  .status {
    position: fixed;
    z-index: 4;
    left: 0;
    bottom: 0;
    padding: 2px 4px 0 0;
    border: 1px solid #ccc;
    border-width: 1px 1px 0 0;
    background: #f9f9fb;
    color: #3a3944;
    font-size: 12px;
    line-height: 16px;
  }
</style>
